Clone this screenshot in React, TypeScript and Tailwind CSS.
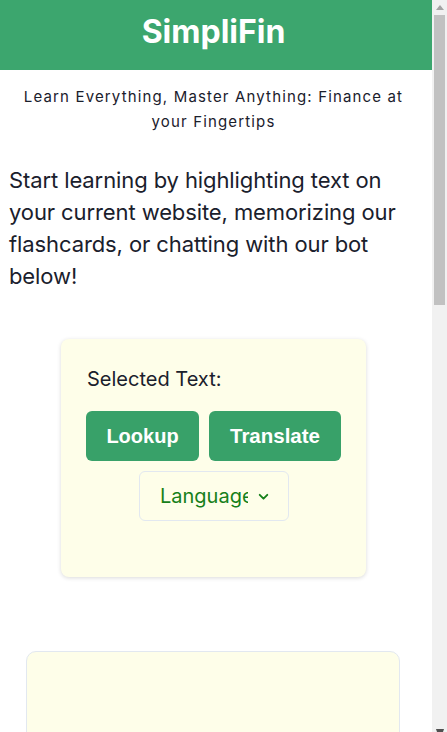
import React from "react";

function FakeScrollbar() {
  return (
    <div className="w-[15px] h-screen bg-[#f1f1f1] flex flex-col items-stretch shrink-0">
      <div className="h-[15px] flex items-center justify-center">
        <svg width="8" height="5" viewBox="0 0 8 5"><path d="M4 0L8 5H0z" fill="#a3a3a3" /></svg>
      </div>
      <div className="h-[290px] mx-[2px] bg-[#c1c1c1]"></div>
      <div className="flex-1"></div>
      <div className="h-[15px] flex items-end justify-center">
        <svg width="8" height="3" viewBox="0 0 8 3"><path d="M0 0H8L7 3H1z" fill="#505050" /></svg>
      </div>
    </div>
  );
}

export default function App() {
  return (
    <div className="flex h-screen overflow-hidden bg-white">
      <div className="w-[432px] shrink-0 min-h-[1770px] text-[#1a202c]" style={{ fontFamily: "Inter, 'Noto Sans', sans-serif" }}>
        <header className="h-[70px] bg-[#3ca66e] flex items-center justify-center">
          <h1 className="text-[32px] font-bold text-white leading-none pb-[6px] pr-[5px]">SimpliFin</h1>
        </header>
        <div className="w-[427px]">
          <p className="text-center text-[15px] leading-[25px] px-[20px] pt-[14px] tracking-[1.15px]">
            Learn Everything, Master Anything: Finance at your Fingertips
          </p>
          <p className="text-[22px] leading-[32px] pl-[9px] pr-[25px] pt-[30px] tracking-[-0.1px]">
            Start learning by highlighting text on your current website, memorizing our flashcards, or chatting with our bot below!
          </p>
          <div className="mt-[47px] ml-[61px] w-[305px] h-[238px] bg-[#fefee9] rounded-[8px] shadow-[0_1px_4px_rgba(0,0,0,0.15)] pt-[25px] px-[25px]">
            <div className="text-[20px] leading-[30px] pl-[1px]">Selected Text:</div>
            <div className="flex gap-[10px] mt-[17px]">
              <button className="w-[113px] h-[50px] rounded-[6px] bg-[#38a169] text-white text-[20px] font-bold" style={{ fontFamily: "'Liberation Sans', Arial, sans-serif" }}>Lookup</button>
              <button className="w-[132px] h-[50px] rounded-[6px] bg-[#38a169] text-white text-[20.5px] font-bold" style={{ fontFamily: "'Liberation Sans', Arial, sans-serif" }}>Translate</button>
            </div>
            <div className="flex mt-[10px] pl-[53px]">
              <div className="w-[150px] h-[50px] border border-[#e2e8f0] rounded-[6px] flex items-center pl-[20px]">
                <span className="text-[20px] text-[#16801a] overflow-hidden whitespace-nowrap w-[88px]">Language</span>
                <svg width="13" height="13" viewBox="0 0 24 24" fill="none" stroke="#16801a" strokeWidth="3.5" strokeLinecap="round" strokeLinejoin="round" className="ml-[9px]">
                  <path d="M5 9l7 7 7-7" />
                </svg>
              </div>
            </div>
          </div>
          <div className="mt-[74px] ml-[26px] w-[374px] h-[400px] bg-[#fefee9] rounded-[10px] border border-[#e2e8f0]"></div>
        </div>
      </div>
      <FakeScrollbar />
    </div>
  );
}
